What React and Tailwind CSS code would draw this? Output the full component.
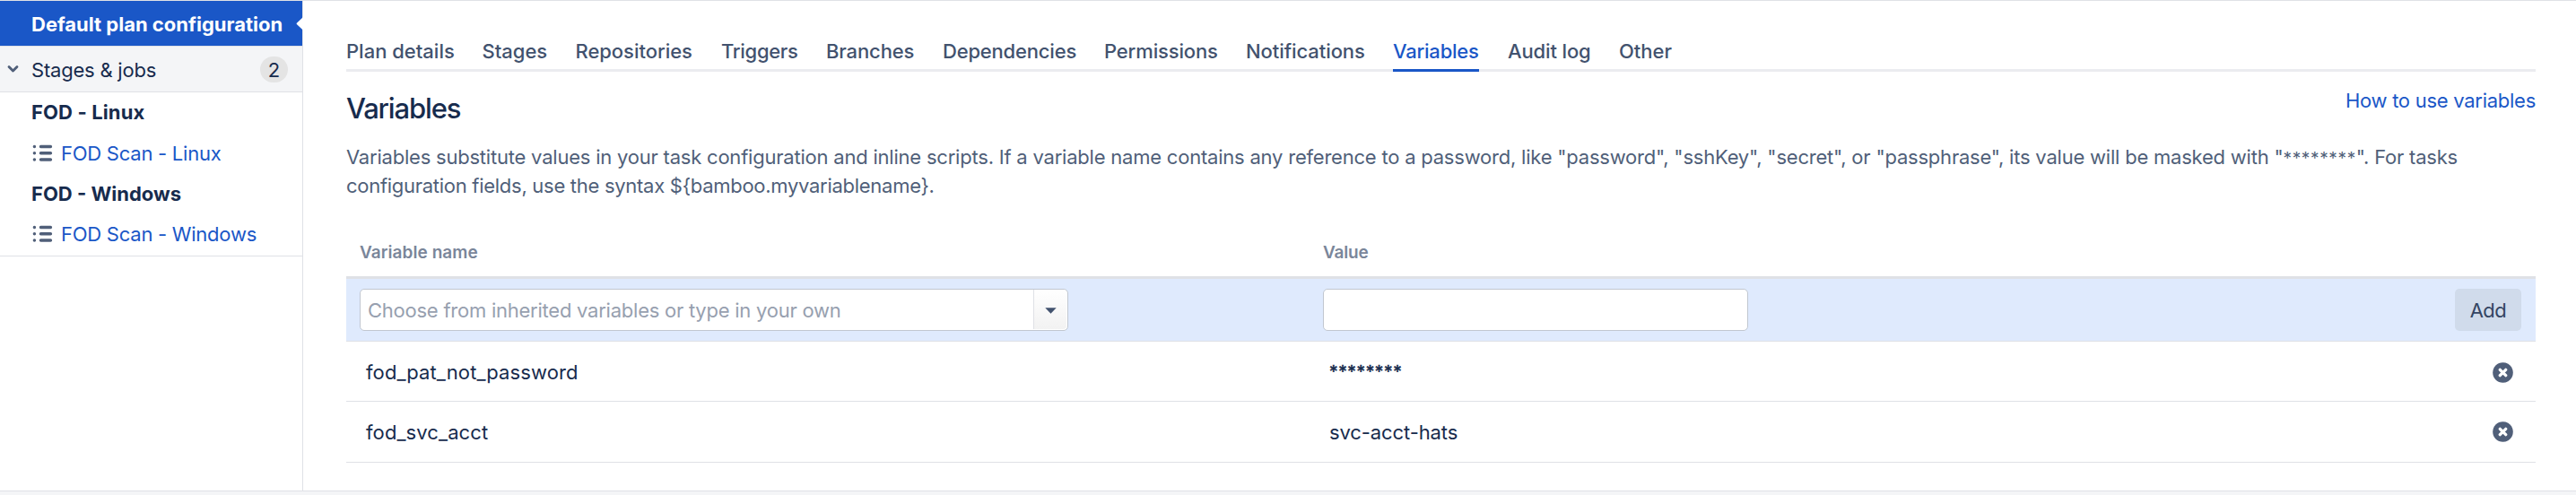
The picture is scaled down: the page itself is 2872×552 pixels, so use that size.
const TABS = [
  { label: 'Plan details', cls: 'w-[119.5px]' },
  { label: 'Stages', cls: 'w-[72px]' },
  { label: 'Repositories', cls: 'w-[130.5px] tracking-[-0.04px]' },
  { label: 'Triggers', cls: 'w-[85px] tracking-[-0.3px]' },
  { label: 'Branches', cls: 'w-[98px] tracking-[-0.13px]' },
  { label: 'Dependencies', cls: 'w-[148px] tracking-[-0.19px]' },
  { label: 'Permissions', cls: 'w-[126px] tracking-[-0.15px]' },
  { label: 'Notifications', cls: 'w-[132px] tracking-[-0.07px]' },
  { label: 'Variables', cls: 'w-[96px] tracking-[-0.22px]', active: true },
  { label: 'Audit log', cls: 'w-[92px] tracking-[-0.14px]' },
  { label: 'Other', cls: 'w-[59px] tracking-[-0.03px]' },
];

function JobIcon() {
  return (
    <svg className="h-[20px] w-[23px] shrink-0" viewBox="0 0 23 20" fill="none" stroke="#505f79" strokeLinecap="round" strokeWidth="3.5">
      <path d="M9.5 2.5H20.4M9.5 9.7H20.4M9.5 16.9H20.4" />
      <path d="M2.4 2.5h.01M2.4 9.7h.01M2.4 16.9h.01" />
    </svg>
  );
}

function Job({ children, className }) {
  return (
    <a className={`flex items-center gap-[9px] pl-[36px] text-[#1a57c7] tracking-[-0.25px] ${className}`}>
      <JobIcon />
      <span>{children}</span>
    </a>
  );
}

function Sidebar() {
  return (
    <aside className="flex w-[338px] shrink-0 flex-col border-r border-[#dfe1e6]">
      <div className="relative flex h-[50px] items-center bg-[#1a57c7] pt-[2px] pl-[35px] font-bold text-white">
        Default plan configuration
        <svg className="absolute top-[18px] right-[-1px] h-[15px] w-[8px]" viewBox="0 0 8 15">
          <path d="M8 0L0.8 6.8Q0.3 7.4 0.8 8L8 14.8Z" fill="#fff" />
        </svg>
      </div>
      <div className="flex h-[52px] items-center border-y border-[#dfe1e6] bg-[#f4f5f7] pr-[16px] pl-[8px] text-[#172b4d]">
        <svg className="h-[10px] w-[13px]" viewBox="0 0 13 10" fill="none" stroke="#505f79" strokeWidth="2.8" strokeLinecap="round" strokeLinejoin="round">
          <path d="M2 2.4L6.5 7L11 2.4" />
        </svg>
        <span className="grow pt-[2px] pl-[14px] tracking-[-0.21px]">Stages &amp; jobs</span>
        <span className="flex h-[29px] w-[31px] items-center justify-center rounded-full bg-[#e4e4e4] pt-[2px]">2</span>
      </div>
      <div className="flex h-[183px] flex-col border-b border-[#dfe1e6] pt-[6px] text-[#172b4d]">
        <div className="h-[32px] pl-[35px] font-bold tracking-[0.12px]">FOD - Linux</div>
        <Job className="mt-[14px] h-[32px]">FOD Scan - Linux</Job>
        <div className="mt-[13px] h-[32px] pl-[35px] font-bold">FOD - Windows</div>
        <Job className="mt-[13px] h-[32px]">FOD Scan - Windows</Job>
      </div>
    </aside>
  );
}

function DeleteIcon() {
  return (
    <svg className="h-[23px] w-[23px]" viewBox="0 0 23 23">
      <circle cx="11.5" cy="11.5" r="11.3" fill="#505f79" />
      <path d="M8.3 8.3L14.7 14.7M14.7 8.3L8.3 14.7" stroke="#fff" strokeWidth="3.3" strokeLinecap="round" />
    </svg>
  );
}

function VariableRow({ name, value, rowClass, valueClass }) {
  return (
    <div className={`flex items-center border-b border-[#dfe1e6] pr-[25px] pl-[22px] text-[#172b4d] ${rowClass}`}>
      <span className="w-[1074px] tracking-[0.1px]">{name}</span>
      <span className={`grow ${valueClass}`}>{value}</span>
      <DeleteIcon />
    </div>
  );
}

export default function App() {
  return (
    <div className="flex h-[552px] w-[2872px] flex-col border-t border-[#dfe1e6] bg-white font-['Inter',sans-serif] text-[22px] leading-[32px] whitespace-nowrap">
      <div className="flex h-[546px]">
        <Sidebar />
        <main className="flex w-[2534px] flex-col pt-[40px] pr-[45px] pl-[48px]">
          <nav className="flex h-[39px] gap-[32px] font-medium text-[#42526e] shadow-[inset_0_-3px_0_#ebecf0]">
            {TABS.map((t) => (
              <a key={t.label} className={`shrink-0 ${t.cls} ${t.active ? 'border-b-3 border-[#1a57c7] text-[#1a57c7]' : ''}`}>
                {t.label}
              </a>
            ))}
          </nav>
          <div className="mt-[16px] flex h-[45px] items-start justify-between">
            <h1 className="pt-[5px] text-[31px] leading-[40px] font-medium tracking-[-1.15px] text-[#172b4d]">Variables</h1>
            <a className="tracking-[-0.27px] text-[#1a57c7]">How to use variables</a>
          </div>
          <p className="mt-[18px] text-[#505f79]">
            <span className="block tracking-[-0.214px]">
              Variables substitute values in your task configuration and inline scripts. If a variable name contains any reference to a password, like "password", "sshKey", "secret", or "passphrase", its value will be masked with "<span className="text-[19px] leading-none tracking-[0.65px]">********</span>". For tasks
            </span>
            <span className="block tracking-[-0.28px]">configuration fields, use the syntax {'${bamboo.myvariablename}'}.</span>
          </p>
          <div className="mt-[32px] flex h-[56px] items-center border-b-3 border-[#dfe1e6] pl-[15px] text-[19px] font-semibold text-[#7a869a]">
            <span className="w-[1074px] tracking-[0.06px]">Variable name</span>
            <span className="tracking-[-0.19px]">Value</span>
          </div>
          <div className="flex h-[70px] items-center border-b border-[#dfe1e6] bg-[#dfeafd] pr-[16px] pl-[15px]">
            <div className="flex h-[47px] w-[790px] items-center rounded-[5px] border border-[#c1c7d0] bg-white pl-[8px]">
              <span className="grow tracking-[-0.24px] text-[#97a0af]">Choose from inherited variables or type in your own</span>
              <span className="mr-px mb-px flex h-[44px] w-[37px] items-center justify-center rounded-r-[4px] border-l border-[#dfe1e6] bg-linear-to-b from-white to-[#f2f2f2]">
                <svg className="mt-[2px] h-[7px] w-[13px]" viewBox="0 0 13 7">
                  <path d="M0.3 0.3H12.7L6.5 6.8Z" fill="#42526e" />
                </svg>
              </span>
            </div>
            <div className="ml-[284px] h-[47px] w-[474px] rounded-[5px] border border-[#c1c7d0] bg-white" />
            <button className="ml-auto h-[47px] w-[74px] rounded-[5px] bg-[#d0dbeb] text-center tracking-[-0.5px] text-[#344563]">Add</button>
          </div>
          <VariableRow name="fod_pat_not_password" value="********" rowClass="h-[67px] pt-[2px]" valueClass="text-[19px] tracking-[0.65px] [-webkit-text-stroke:0.5px]" />
          <VariableRow name="fod_svc_acct" value="svc-acct-hats" rowClass="h-[68px]" valueClass="tracking-[-0.1px]" />
        </main>
      </div>
      <footer className="h-[5px] border-t border-[#dfe1e6] bg-[#f4f5f7]" />
    </div>
  );
}
